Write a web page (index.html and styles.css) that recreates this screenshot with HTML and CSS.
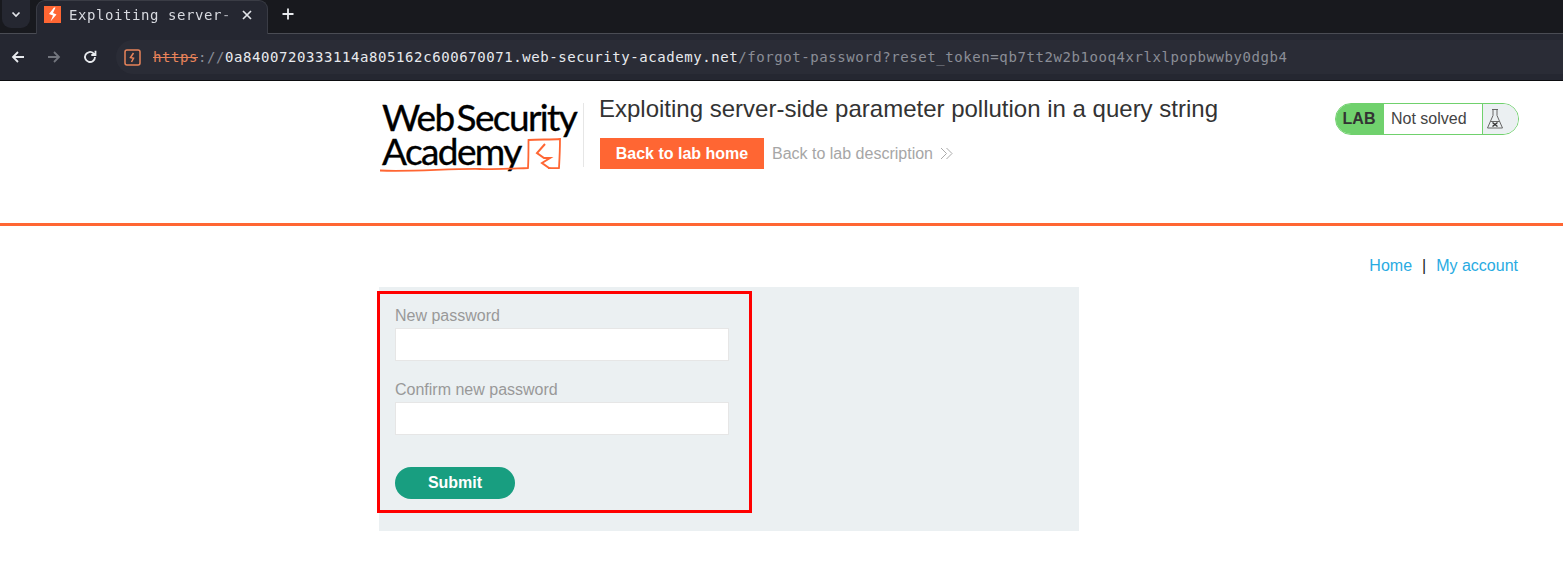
FILE: index.html
```html
<!DOCTYPE html>
<html lang="en">
<head>
<meta charset="utf-8">
<title>Exploiting server-side parameter pollution in a query string</title>
<link rel="stylesheet" href="styles.css">
</head>
<body>
<div class="browser">
  <div class="tabstrip">
    <div class="tab-menu"><svg width="12" height="12" viewBox="0 0 12 12"><path d="M2.5 4.5 6 8l3.5-3.5" fill="none" stroke="#e3e5ea" stroke-width="1.7"/></svg></div>
    <div class="tab">
      <svg class="favicon" width="17" height="17" viewBox="0 0 17 17"><rect width="17" height="17" fill="#ff6633"/><path d="M10 1.500 5 8l4 1.500L6.500 15.500 12.500 8.500 9 7l2.500-5.500z" fill="#fff"/></svg>
      <span class="tab-title">Exploiting server-</span>
      <svg class="tab-close" width="12" height="12" viewBox="0 0 12 12"><path d="M2 2l8 8M10 2l-8 8" stroke="#e3e5ea" stroke-width="1.7"/></svg>
    </div>
    <svg class="new-tab" width="14" height="14" viewBox="0 0 14 14"><path d="M7 1.500v11M1.500 7h11" stroke="#e8eaee" stroke-width="1.800"/></svg>
  </div>
  <div class="toolbar">
    <svg class="nav-icon" width="16" height="16" viewBox="0 0 16 16"><path d="M14 8H3M8 3 3 8l5 5" fill="none" stroke="#e8eaee" stroke-width="1.800"/></svg>
    <svg class="nav-icon" width="16" height="16" viewBox="0 0 16 16"><path d="M2 8h11M8 3l5 5-5 5" fill="none" stroke="#72757d" stroke-width="1.800"/></svg>
    <svg class="nav-icon" width="16" height="16" viewBox="0 0 16 16"><path d="M13 8a5 5 0 1 1-1.500-3.600L13.500 6M13.500 1.800V6H9.300" fill="none" stroke="#e8eaee" stroke-width="1.800"/></svg>
    <div class="omnibox">
      <svg class="site-icon" width="17" height="17" viewBox="0 0 17 17"><rect x="1" y="1" width="15" height="15" rx="2" fill="none" stroke="#e8835a" stroke-width="1.500"/><path d="M9.500 4 6.500 8.500l3 .8L7.500 13" fill="none" stroke="#e8835a" stroke-width="1.500"/></svg>
      <span class="url"><s class="url-scheme">https</s><span class="url-dim">://</span><span class="url-host">0a8400720333114a805162c600670071.web-security-academy.net</span><span class="url-dim">/forgot-password?reset_token=qb7tt2w2b1ooq4xrlxlpopbwwby0dgb4</span></span>
    </div>
  </div>
</div>
<div class="page">
  <header class="lab-header">
    <div class="logo">
      <span class="logo-line">Web Security</span>
      <span class="logo-line">Academy</span>
      <svg class="logo-mark" width="182" height="40" viewBox="0 0 182 40"><path d="M1 35.500c30 1.500 70-2 100-1.500 16 .300 32-.500 48-1 .500-8 .500-19 .500-28 10-.500 22-.500 31.500-1 0 9-.500 20-1 29-4 .300-7 0-11 0" fill="none" stroke="#ff6633" stroke-width="1.800"/><path d="M166 9l-8 9 7 5h6l-8 5 7 5" fill="none" stroke="#ff6633" stroke-width="2"/></svg>
    </div>
    <div class="lab-info">
      <h2 class="lab-title">Exploiting server-side parameter pollution in a query string</h2>
      <div class="lab-links">
        <a class="lab-home">Back to lab home</a>
        <a class="lab-desc">Back to lab description <svg class="chevrons" width="13" height="13" viewBox="0 0 13 13"><path d="M1 1 6.500 6.500 1 12M6.500 1 12 6.500 6.500 12" fill="none" stroke="#aaa" stroke-width="1"/></svg></a>
      </div>
    </div>
    <div class="status">
      <span class="status-lab">LAB</span>
      <span class="status-text">Not solved</span>
      <span class="status-icon"><svg width="18" height="22" viewBox="0 0 18 22"><path d="M6 1.500h6M7 1.500v6L1.500 20h15L11 7.500v-6M4.500 13.500h9" fill="none" stroke="#666" stroke-width="1"/><path d="M6.500 14.500l5 4M11.500 14.500l-5 4" stroke="#333" stroke-width="1.400"/></svg></span>
    </div>
  </header>
  <nav class="top-links"><a>Home</a><span class="sep">|</span><a>My account</a></nav>
  <div class="panel">
    <form class="form">
      <label class="field-label">New password</label>
      <div class="input"></div>
      <label class="field-label">Confirm new password</label>
      <div class="input"></div>
      <button class="submit" type="button">Submit</button>
    </form>
    <div class="highlight"></div>
  </div>
</div>
</body>
</html>
```
FILE: styles.css
```css
* { box-sizing: border-box; }
html, body { margin: 0; padding: 0; }
body { width: 1563px; height: 580px; overflow: hidden; background: #fff; font-family: "Liberation Sans", Arial, sans-serif; }

.browser { height: 81px; background: #252731; border-bottom: 1px solid #0c0d10; font-family: "DejaVu Sans Mono", monospace; }
.tabstrip { height: 34px; background: #18191e; border-bottom: 1px solid #4a4c54; display: flex; align-items: flex-start; padding-left: 2px; }
.tab-menu { width: 28px; height: 28px; border-radius: 0 0 9px 9px; background: #252731; display: flex; align-items: center; justify-content: center; }
.tab { width: 232px; height: 34px; margin-left: 6px; background: #252731; border: 1px solid #3a3c45; border-bottom: 0; border-radius: 9px 9px 0 0; display: flex; align-items: center; padding: 0 14px 6px 7px; }
.favicon { flex: none; }
.tab-title { margin-left: 8px; color: #d8dae0; font-size: 14px; letter-spacing: .57px; white-space: nowrap; flex: 1; overflow: hidden; -webkit-mask-image: linear-gradient(to right, #000 88%, transparent 100%); mask-image: linear-gradient(to right, #000 88%, transparent 100%); }
.tab-close { flex: none; }
.new-tab { margin: 7px 0 0 13px; }

.toolbar { height: 46px; display: flex; align-items: center; padding: 0 0 0 10px; }
.nav-icon { margin-right: 20px; flex: none; }
.nav-icon:nth-child(3) { margin-right: 18px; }
.omnibox { height: 34px; flex: 1; background: #2a2c36; border-radius: 17px 0 0 17px; display: flex; align-items: center; padding-left: 8px; }
.site-icon { flex: none; }
.url { margin-left: 12px; font-size: 14px; letter-spacing: .575px; white-space: nowrap; }
.url-scheme { color: #e8835a; }
.url-dim { color: #8b8e97; }
.url-host { color: #e8eaee; }

.page { color: #333; }
.lab-header { height: 145px; border-bottom: 3px solid #ff6633; display: flex; align-items: flex-start; padding: 22px 44px 0 379px; }
.logo { width: 205px; height: 64px; border-right: 1px solid #e6e6e6; position: relative; flex: none; font-family: "Lato", sans-serif; color: #000; }
.logo-line { display: block; font-size: 37px; line-height: 34px; letter-spacing: -1.600px; word-spacing: -5px; margin: 0 0 0 3px; white-space: nowrap; position: relative; top: -3px; -webkit-text-stroke: .35px #000; }
.logo-mark { position: absolute; left: 0; top: 32px; }
.lab-info { width: 640px; margin-left: 16px; flex: none; }
.lab-title { margin: -8px 0 0 -1px; font-size: 24px; font-weight: 400; line-height: 28px; color: #333; white-space: nowrap; }
.lab-links { display: flex; align-items: center; margin-top: 15px; }
.lab-home { width: 164px; height: 31px; background: #ff6633; color: #fff; font-weight: 700; font-size: 16px; display: flex; align-items: center; justify-content: center; }
.lab-desc { margin-left: 8px; color: #a6a6a6; font-size: 16px; display: flex; align-items: center; gap: 4px; }
.chevrons { margin-left: 3px; }
.status { width: 184px; height: 32px; border: 1px solid #70d16d; border-radius: 16px; display: flex; overflow: hidden; font-size: 16px; background: #fff; flex: none; margin-left: 95px; }
.status-lab { width: 48px; background: #70d16d; color: #333; font-weight: 700; display: flex; align-items: center; justify-content: center; padding-right: 2px; }
.status-text { width: 99px; padding-left: 7px; color: #444; display: flex; align-items: center; border-right: 1px solid #70d16d; }
.status-icon { flex: 1; background: #ebf0f2; display: flex; align-items: center; padding-left: 3px; }

.top-links { height: 61px; display: flex; justify-content: flex-end; align-items: flex-start; padding: 31px 45px 0 0; font-size: 16px; line-height: 18px; color: #222; }
.top-links a { color: #29abe2; }
.sep { margin: 0 10px; }

.panel { width: 700px; height: 244px; margin-left: 379px; background: #ebf0f2; position: relative; padding: 20px 0 0 16px; }
.form { width: 334px; display: flex; flex-direction: column; align-items: flex-start; }
.field-label { font-size: 16px; line-height: 18px; color: #999; height: 21px; }
.input { width: 334px; height: 33px; background: #fff; border: 1px solid #e6e6e6; margin-bottom: 20px; }
.submit { width: 120px; height: 32px; margin-top: 12px; padding: 0; border: 0; border-radius: 25px; background: #189e80; color: #fff; font: 700 16px "Liberation Sans", Arial, sans-serif; }
.highlight { position: absolute; left: -2px; top: 4px; width: 375px; height: 222px; border: 3px solid #f00; }
```
